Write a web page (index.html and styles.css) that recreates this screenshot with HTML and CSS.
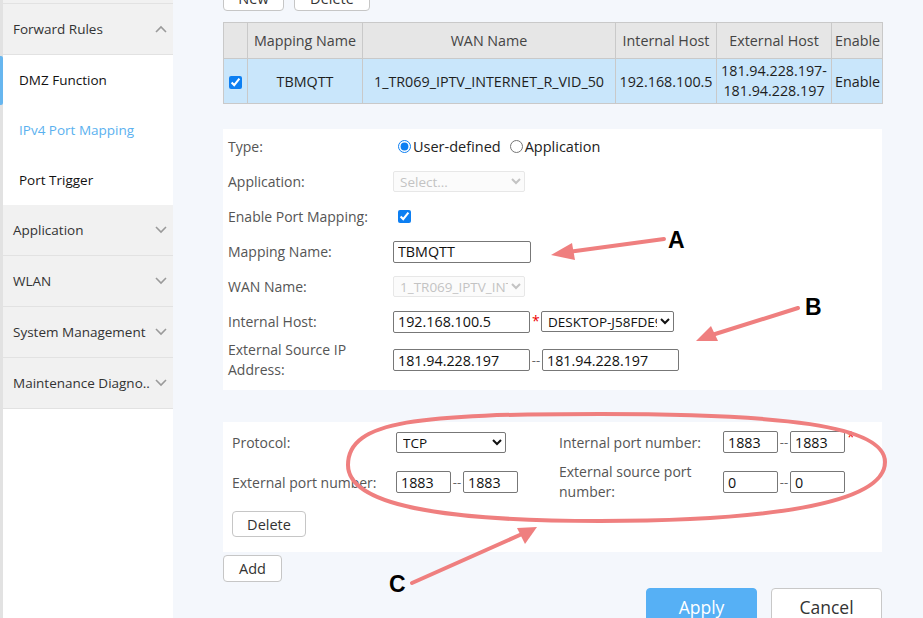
FILE: index.html
```html
<!DOCTYPE html>
<html>
<head>
<meta charset="utf-8">
<link rel="stylesheet" href="styles.css">
</head>
<body>
<div class="page">
  <aside class="sidebar">
    <div class="filler"></div>
    <div class="group-head"><span>Forward Rules</span>
      <svg class="chev" width="12" height="8" viewBox="0 0 12 8"><polyline points="1,7 6,2 11,7" fill="none" stroke="#9a9a9a" stroke-width="1.6"/></svg>
    </div>
    <div class="sub-item">DMZ Function</div>
    <div class="sub-item active">IPv4 Port Mapping</div>
    <div class="sub-item">Port Trigger</div>
    <div class="group-head"><span>Application</span>
      <svg class="chev" width="12" height="8" viewBox="0 0 12 8"><polyline points="1,1 6,6 11,1" fill="none" stroke="#9a9a9a" stroke-width="1.6"/></svg>
    </div>
    <div class="group-head"><span>WLAN</span>
      <svg class="chev" width="12" height="8" viewBox="0 0 12 8"><polyline points="1,1 6,6 11,1" fill="none" stroke="#9a9a9a" stroke-width="1.6"/></svg>
    </div>
    <div class="group-head"><span>System Management</span>
      <svg class="chev" width="12" height="8" viewBox="0 0 12 8"><polyline points="1,1 6,6 11,1" fill="none" stroke="#9a9a9a" stroke-width="1.6"/></svg>
    </div>
    <div class="group-head"><span>Maintenance Diagno..</span>
      <svg class="chev" width="12" height="8" viewBox="0 0 12 8"><polyline points="1,1 6,6 11,1" fill="none" stroke="#9a9a9a" stroke-width="1.6"/></svg>
    </div>
    <div class="edge-marker"></div>
  </aside>

  <main class="main">
    <div class="top-buttons">
      <button class="btn btn-new">New</button>
      <button class="btn btn-del">Delete</button>
    </div>

    <table class="rules">
      <colgroup>
        <col class="c0"><col class="c1"><col class="c2"><col class="c3"><col class="c4"><col class="c5">
      </colgroup>
      <thead>
        <tr><th></th><th>Mapping Name</th><th>WAN Name</th><th>Internal Host</th><th>External Host</th><th class="tight">Enable</th></tr>
      </thead>
      <tbody>
        <tr><td><input type="checkbox" class="cb" checked></td><td>TBMQTT</td><td>1_TR069_IPTV_INTERNET_R_VID_50</td><td>192.168.100.5</td><td class="two">181.94.228.197-<br>181.94.228.197</td><td class="tight">Enable</td></tr>
      </tbody>
    </table>

    <section class="panel panel-main">
      <div class="row">
        <div class="label">Type:</div>
        <div class="ctrl">
          <label class="radio"><input type="radio" name="t" checked>User-defined</label>
          <label class="radio"><input type="radio" name="t">Application</label>
        </div>
      </div>
      <div class="row">
        <div class="label">Application:</div>
        <div class="ctrl"><select class="sel sel-dis" disabled><option>Select...</option></select></div>
      </div>
      <div class="row">
        <div class="label">Enable Port Mapping:</div>
        <div class="ctrl"><input type="checkbox" class="cb cb-form" checked></div>
      </div>
      <div class="row">
        <div class="label">Mapping Name:</div>
        <div class="ctrl"><input class="inp inp-wide" value="TBMQTT"></div>
      </div>
      <div class="row">
        <div class="label">WAN Name:</div>
        <div class="ctrl"><select class="sel sel-dis" disabled><option>1_TR069_IPTV_INTERNET_R_VID_50</option></select></div>
      </div>
      <div class="row">
        <div class="label">Internal Host:</div>
        <div class="ctrl"><input class="inp inp-ip" value="192.168.100.5"><span class="req">*</span><select class="sel sel-host"><option>DESKTOP-J58FDE9</option></select></div>
      </div>
      <div class="row row-tall">
        <div class="label label-2">External Source IP<br>Address:</div>
        <div class="ctrl"><input class="inp inp-ip" value="181.94.228.197"><span class="dash">--</span><input class="inp inp-ip2" value="181.94.228.197"></div>
      </div>
    </section>

    <section class="panel panel-ports">
      <div class="pgrid">
        <div class="plabel">Protocol:</div>
        <div class="pctrl"><select class="sel sel-proto"><option>TCP</option></select></div>
        <div class="plabel">Internal port number:</div>
        <div class="pctrl"><input class="inp inp-port" value="1883"><span class="dash">--</span><input class="inp inp-port" value="1883"><span class="req">*</span></div>

        <div class="plabel">External port number:</div>
        <div class="pctrl"><input class="inp inp-port" value="1883"><span class="dash">--</span><input class="inp inp-port" value="1883"></div>
        <div class="plabel label-2">External source port<br>number:</div>
        <div class="pctrl"><input class="inp inp-port" value="0"><span class="dash">--</span><input class="inp inp-port" value="0"></div>
      </div>
      <button class="btn btn-rowdel">Delete</button>
    </section>

    <button class="btn btn-add">Add</button>

    <div class="actions">
      <button class="btn-apply">Apply</button>
      <button class="btn-cancel">Cancel</button>
    </div>
  </main>

  <svg class="annot" width="923" height="618" viewBox="0 0 923 618">
    <g stroke="#ef7f7f" stroke-width="4" fill="none" stroke-linecap="round">
      <line x1="664" y1="239" x2="568" y2="252"/>
      <line x1="798" y1="308" x2="712" y2="335"/>
      <path d="M348 465 C348 420 420 414 600 414 C780 414 885 425 885 462 C885 505 760 521 600 521 C440 521 348 505 348 465 Z"/>
      <line x1="412" y1="583" x2="522" y2="534"/>
    </g>
    <g fill="#ef7f7f">
      <polygon points="551,255 572,243 575,260"/>
      <polygon points="696,341 711,326 718,341"/>
      <polygon points="537,527 517,528 525,544"/>
    </g>
    <g class="letters">
      <text x="668" y="248">A</text>
      <text x="805" y="315">B</text>
      <text x="389" y="592">C</text>
    </g>
  </svg>
</div>
</body>
</html>
```

FILE: styles.css
```css
* { box-sizing: border-box; }
html, body { margin: 0; padding: 0; }
body {
  width: 923px;
  height: 618px;
  overflow: hidden;
  background: #f4f7fc;
  font-family: "Open Sans", "Noto Sans", sans-serif;
  font-size: 14px;
  color: #333;
}
.page {
  position: relative;
  display: flex;
  width: 923px;
  height: 618px;
}

/* Sidebar */
.sidebar {
  position: relative;
  width: 173px;
  flex: none;
  background: #fff;
  border-left: 3px solid #e2e2e2;
  display: flex;
  flex-direction: column;
}
.sidebar > * { flex-shrink: 0; }
.filler {
  height: 4px;
  background: #f1f1f1;
  border-bottom: 1px solid #e2e2e2;
}
.group-head {
  height: 51px;
  background: #f1f1f1;
  border-bottom: 1px solid #e2e2e2;
  display: flex;
  align-items: center;
  justify-content: space-between;
  padding: 0 6px 0 10px;
  color: #333;
  font-size: 13.5px;
}
.chev { display: block; }
.sub-item {
  height: 50px;
  display: flex;
  align-items: center;
  padding-left: 16px;
  background: #fff;
  color: #111;
  font-size: 13.5px;
}
.sub-item.active { color: #5ab1ef; }
.edge-marker {
  position: absolute;
  left: -3px;
  top: 56px;
  width: 3px;
  height: 49px;
  background: #67b6ef;
  border-radius: 0 2px 2px 0;
}

/* Main */
.main {
  flex: 1;
  padding-left: 50px;
  display: flex;
  flex-direction: column;
  align-items: flex-start;
}
.main > * { flex-shrink: 0; }
.top-buttons {
  display: flex;
  gap: 10px;
  margin-top: -15px;
}
.btn {
  font-family: inherit;
  font-size: 14.5px;
  color: #333;
  background: #fff;
  border: 1px solid #c6c6c6;
  border-radius: 4px;
  padding: 0;
}
.btn-new { width: 61px; height: 26px; }
.btn-del { width: 76px; height: 26px; }

.rules {
  margin-top: 11px;
  width: 659px;
  border-collapse: collapse;
  table-layout: fixed;
  font-size: 14.3px;
}
.c0 { width: 24px; }
.c1 { width: 115px; }
.c2 { width: 253px; }
.c3 { width: 101px; }
.c4 { width: 115px; }
.c5 { width: 51px; }
.rules th, .rules td {
  border: 1px solid #c9c9c9;
  text-align: center;
  padding: 0;
  white-space: nowrap;
  overflow: hidden;
}
.rules th {
  height: 36px;
  background: #e6e6e6;
  font-weight: normal;
  color: #444;
}
.rules td {
  height: 45px;
  background: #c9e6fb;
  color: #1e1e1e;
}
.rules td.two { line-height: 20px; }
.rules .tight { text-align: left; padding-left: 3px; }
.cb {
  margin: 0;
  width: 13px;
  height: 13px;
  accent-color: #0d7ff2;
  vertical-align: middle;
}

/* Panels */
.panel { background: #fff; width: 659px; }
.panel-main {
  margin-top: 25px;
  padding: 0 0 9px 5px;
  display: flex;
  flex-direction: column;
}
.row {
  display: flex;
  align-items: center;
  height: 35px;
}
.row-tall { height: 42px; }
.label {
  width: 165px;
  flex: none;
  color: #555;
}
.label-2 { line-height: 20px; }
.ctrl {
  display: flex;
  align-items: center;
  color: #222;
}
.radio {
  display: inline-flex;
  align-items: center;
  margin-right: 4px;
  font-size: 14.5px;
}
.radio input {
  margin: 0 2px 0 5px;
  width: 13px;
  height: 13px;
  accent-color: #0d7ff2;
}
.cb-form { margin-left: 5px; }

.inp {
  font-family: inherit;
  font-size: 14.3px;
  color: #111;
  height: 22px;
  border: 1px solid #777;
  border-radius: 2px;
  padding: 0 4px;
  background: #fff;
}
.inp-wide { width: 138px; }
.inp-ip { width: 137px; }
.inp-ip2 { width: 137px; }
.req { color: #e00; width: 11px; text-align: left; padding-left: 2px; font-size: 14px; align-self: flex-start; margin-top: 0; }
.dash { color: #666; width: 12px; text-align: center; font-size: 13px; }

.sel {
  font-family: inherit;
  font-size: 13.5px;
  height: 21px;
  border: 1px solid #777;
  border-radius: 2px;
  background: #fff;
  color: #111;
  padding: 0 0 0 2px;
}
.sel-dis {
  width: 132px;
  border-color: #ddd;
  color: #aaa;
  background: #fafafa;
}
.sel-host { width: 133px; }
.sel-proto { width: 110px; }

.panel-ports {
  margin-top: 32px;
  padding: 9px 0 15px 9px;
}
.pgrid {
  display: grid;
  grid-template-columns: 164px 163px 164px auto;
  grid-template-rows: 22px 42px;
  row-gap: 8px;
  align-items: center;
}
.plabel { color: #555; }
.pctrl { display: flex; align-items: center; }
.pctrl .req { margin-top: -4px; }
.inp-port { width: 55px; }
.btn-rowdel {
  margin-top: 8px;
  width: 74px;
  height: 26px;
}
.btn-add {
  margin-top: 3px;
  width: 59px;
  height: 27px;
}
.actions {
  margin-top: 6px;
  width: 659px;
  display: flex;
  justify-content: flex-end;
  gap: 14px;
}
.btn-apply, .btn-cancel {
  width: 111px;
  height: 40px;
  border-radius: 4px;
  font-family: inherit;
  font-size: 17.5px;
  padding: 0 0 3px;
}
.btn-apply {
  background: #56b0f5;
  border: 1px solid #56b0f5;
  color: #fff;
}
.btn-cancel {
  background: #fff;
  border: 1px solid #c8c8c8;
  color: #333;
}

/* Annotation overlay */
.annot {
  position: absolute;
  left: 0;
  top: 0;
  pointer-events: none;
}
.letters text {
  font-family: "Liberation Sans", Arial, sans-serif;
  font-weight: bold;
  font-size: 23px;
  fill: #000;
}
```
